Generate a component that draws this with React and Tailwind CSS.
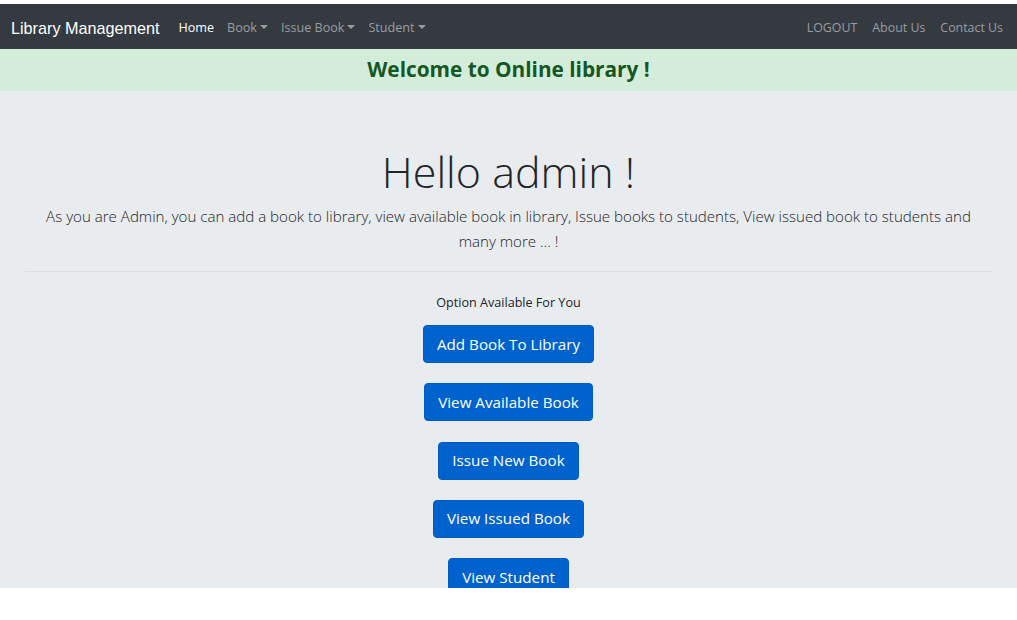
import React from "react";

const Caret = () => (
  <span className="inline-block ml-[3px] align-middle w-0 h-0 border-l-[4px] border-r-[4px] border-t-[4px] border-l-transparent border-r-transparent border-t-current relative top-[-1px]" />
);

export default function App() {
  const buttons = [
    "Add Book To Library",
    "View Available Book",
    "Issue New Book",
    "View Issued Book",
    "View Student",
  ];
  return (
    <div className="w-[1017px] h-[620px] bg-white overflow-hidden" style={{ fontFamily: '"Open Sans", "Noto Sans", sans-serif' }}>
      <div className="h-[4px]" />
      <nav className="h-[45px] bg-[#343a40] flex items-center pl-[11px] pr-[14px] pt-[3px]">
        <span className="text-white text-[16.2px] mr-[19px]" style={{ fontFamily: '"Liberation Sans", Arial, sans-serif' }}>
          Library Management
        </span>
        <div className="flex items-center gap-[13px] text-[12.6px]">
          <span className="text-white">Home</span>
          <span className="text-[#9a9da0]">Book<Caret /></span>
          <span className="text-[#9a9da0]">Issue Book<Caret /></span>
          <span className="text-[#9a9da0]">Student<Caret /></span>
        </div>
        <div className="ml-auto flex items-center gap-[15px] text-[12.4px] text-[#9a9da0]">
          <span>LOGOUT</span>
          <span>About Us</span>
          <span>Contact Us</span>
        </div>
      </nav>
      <div className="h-[42px] bg-[#d4edda] flex items-center justify-center">
        <span className="text-[#155724] text-[20.8px] font-bold">Welcome to Online library !</span>
      </div>
      <div className="h-[497px] bg-[#e9ecef] overflow-hidden px-[25px] pt-[52px]">
        <h1 className="text-center text-[#212529] text-[43px] font-light leading-[58px]">Hello admin !</h1>
        <p className="text-center text-[#212529] text-[15.1px] font-light leading-[25px] mt-[3px] px-[15px]">
          As you are Admin, you can add a book to library, view available book in library, Issue books to students, View issued book to students and many more ... !
        </p>
        <hr className="mt-[17px] border-t border-[#dcdfe2]" />
        <div className="flex flex-col items-center mt-[22px]">
          <span className="text-[12.6px] text-[#212529] leading-[18px]">Option Available For You</span>
          <div className="flex flex-col items-center gap-[20.25px] mt-[13px]">
            {buttons.map((b) => (
              <button key={b} className="h-[38px] px-[13px] bg-[#0062cc] text-white text-[15.2px] rounded-[4px] border border-[#005cbf]">
                {b}
              </button>
            ))}
          </div>
        </div>
      </div>
    </div>
  );
}
